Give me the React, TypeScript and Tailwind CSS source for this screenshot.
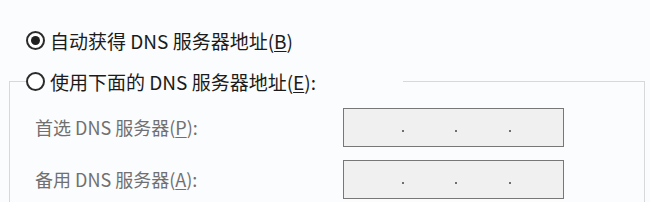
const font = { fontFamily: '"Noto Sans CJK SC", "Noto Sans", sans-serif' };

function Radio({ checked }: { checked?: boolean }) {
  return (
    <span className="flex h-[19px] w-[19px] shrink-0 items-center justify-center rounded-full border-2 border-[#2b2b2b] bg-white">
      {checked && <span className="h-[9px] w-[9px] rounded-full bg-[#1f1f1f]" />}
    </span>
  );
}

function IpBox() {
  return (
    <div className="flex h-[39px] w-[221px] items-center border border-[#777] bg-[#f0f0f0] pl-[58px] pt-[6px]">
      <span className="h-[2px] w-[2px] rounded-full bg-[#444]" />
      <span className="ml-[51px] h-[2px] w-[2px] rounded-full bg-[#444]" />
      <span className="ml-[52px] h-[2px] w-[2px] rounded-full bg-[#444]" />
    </div>
  );
}

export default function App() {
  return (
    <div
      className="h-[202px] w-[650px] overflow-hidden bg-[#fbfcfd] pt-[29px] text-[19px] text-[#1b1b1b]"
      style={font}
    >
      <div className="flex h-[22px] items-center gap-[5px] pl-[26px] leading-none">
        <Radio checked />
        <span>
          自动获得 DNS 服务器地址(<span className="underline underline-offset-2">B</span>)
        </span>
      </div>

      <fieldset className="ml-[9px] mr-[5px] mt-[19px] h-[200px] border border-[#d6d8da] p-0">
        <legend className="ml-[16px] flex h-[22px] w-[377px] items-center gap-[5px] leading-none">
          <Radio />
          <span>
            使用下面的 DNS 服务器地址(<span className="underline underline-offset-2">E</span>):
          </span>
        </legend>

        <div className="mt-[16px] flex flex-col gap-[13px] text-[18px] text-[#707070]">
          <div className="flex items-center">
            <span className="w-[333px] pl-[25px]">
              首选 DNS 服务器(<span className="underline underline-offset-2">P</span>):
            </span>
            <IpBox />
          </div>
          <div className="flex items-center">
            <span className="w-[333px] pl-[25px]">
              备用 DNS 服务器(<span className="underline underline-offset-2">A</span>):
            </span>
            <IpBox />
          </div>
        </div>
      </fieldset>
    </div>
  );
}
